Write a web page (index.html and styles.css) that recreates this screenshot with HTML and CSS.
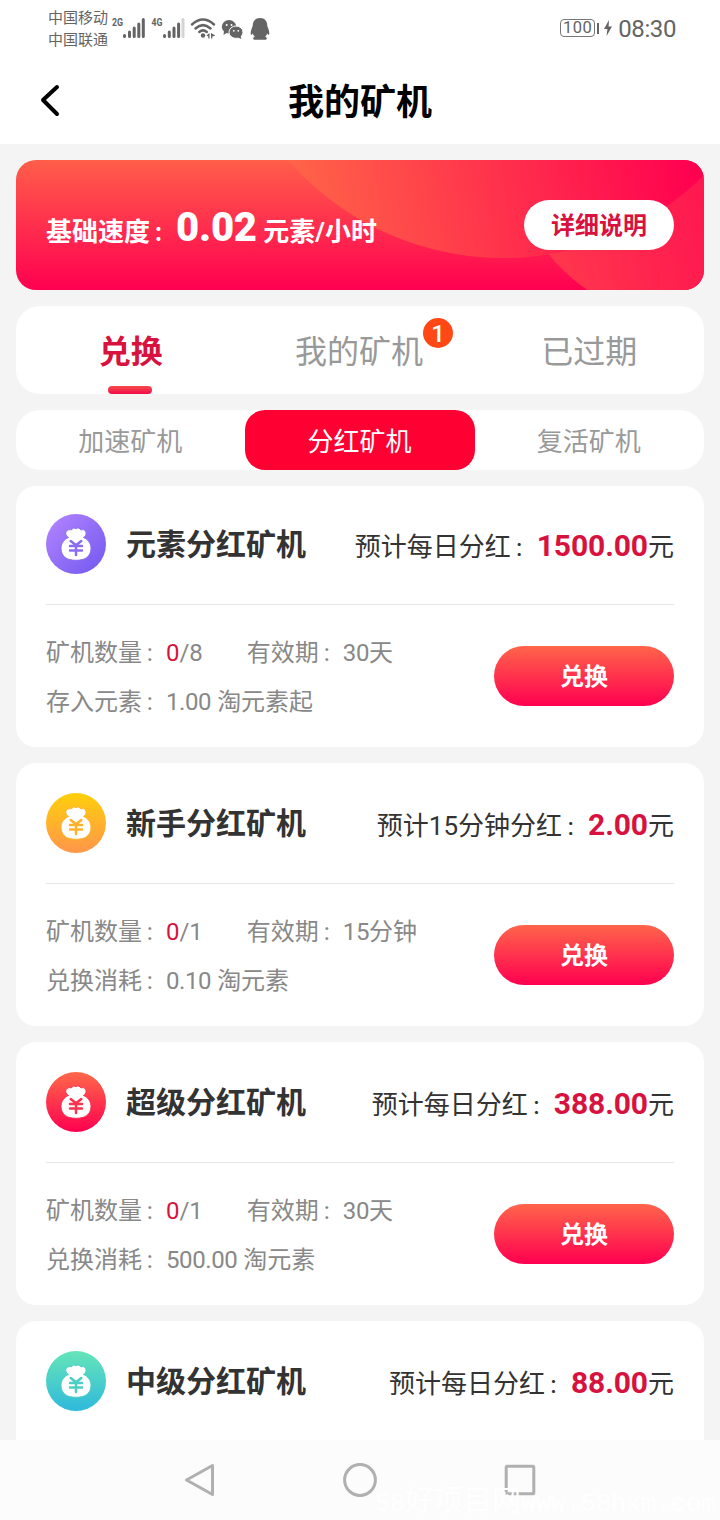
FILE: index.html
```html
<!DOCTYPE html>
<html lang="zh-CN">
<head>
<meta charset="utf-8">
<title>我的矿机</title>
<link rel="stylesheet" href="styles.css">
</head>
<body>
<svg class="defs" width="0" height="0">
  <symbol id="bag" viewBox="0 0 60 60">
    <path fill="#fff" d="M22.500 23.500C19.500 21.500 18.900 18.500 20.900 16.700C22 15.500 24 15.300 25.300 16C26.500 14 29 13.500 30 14.600C31.500 13.500 34 14 35 16C36.500 15.200 38.400 15.600 39.300 17C40.800 19 40 22 37.500 23.500C42.500 25.500 45.200 30 45 34.800C44.500 42.500 39.500 46.300 30 46.300C20.500 46.300 15.500 42.500 15 34.800C14.800 30 17.500 25.500 22.500 23.500Z"/>
    <path class="yen" fill="none" stroke-width="2.500" stroke-linecap="round" stroke-linejoin="round" d="M24.700 27L30 31.300L35.300 27M24 32H36M24 36.500H36M30 31.500V41"/>
  </symbol>
</svg>
<div class="screen">
  <header class="status">
    <div class="carriers"><span>中国移动</span><span>中国联通</span></div>
    <svg class="status-icons" width="162" height="40" viewBox="110 8 162 40" fill="#646464">
      <text class="net" x="112" y="26" textLength="11" lengthAdjust="spacingAndGlyphs">2G</text>
      <g stroke="#646464" stroke-width="3" stroke-linecap="round">
        <path d="M124.500 35.500V36.500M129.500 32V36.500M134.200 28V36.500M138.800 24V36.500M143.300 19.500V36.500"/>
        <path d="M164.500 35.500V36.500M169.300 32V36.500M174 28V36.500M178.600 24V36.500"/>
        <path stroke="#d4d4d4" d="M183 19.500V36.500"/>
      </g>
      <text class="net" x="151.500" y="26" textLength="11" lengthAdjust="spacingAndGlyphs">4G</text>
      <g fill="none" stroke="#646464" stroke-width="2.500" stroke-linecap="round">
        <path d="M192 24.500Q203 14.500 214 24.500M195.500 28.500Q203 21.800 210.500 28.500M199.300 32Q203 28.800 206.800 32"/>
      </g>
      <circle cx="203" cy="35.500" r="2.200"/>
      <path d="M206.500 35.500L209.500 33V38.500H208.300V36.500ZM211 33L215.300 35.500L212.300 36.500V38.500H211Z"/>
      <ellipse cx="229" cy="26.700" rx="7.200" ry="6.700"/><path d="M224 31L223.500 35L228 32Z"/>
      <ellipse cx="236" cy="32.200" rx="7" ry="6.200" stroke="#fff" stroke-width="1"/><path d="M237 37L241.300 39L240.500 35Z"/>
      <g fill="#fff"><circle cx="226.700" cy="25" r="1"/><circle cx="231.500" cy="25" r="1"/><circle cx="233.800" cy="30.800" r=".900"/><circle cx="238.300" cy="30.800" r=".900"/></g>
      <path d="M260 18C255 18 252.700 21.500 252.700 26C252 28 250.500 31 250.700 34C251 35.500 252.200 34.500 253 33.500C253.200 35 254 36 255 36.800C252.500 37.500 252.500 39.500 255 39.800H265C267.500 39.500 267.500 37.500 265 36.800C266 36 266.800 35 267 33.500C267.800 34.500 269 35.500 269.300 34C269.500 31 268 28 267.300 26C267.300 21.500 265 18 260 18Z"/>
    </svg>
    <div class="power">
      <span class="battery">100</span><span class="battery-tip"></span>
      <svg width="8" height="16" viewBox="0 0 8 16" fill="#646464"><path d="M5 0L0 9H3.400L2.600 16L8 6.500H4.600Z"/></svg>
      <span class="clock">08:30</span>
    </div>
  </header>
  <nav class="titlebar">
    <svg class="back" width="24" height="34" viewBox="0 0 24 34" fill="none" stroke="#000" stroke-width="4" stroke-linecap="round" stroke-linejoin="round"><path d="M19 4L5 17L19 31"/></svg>
    <h1>我的矿机</h1>
  </nav>
  <main class="content">
    <section class="banner">
      <svg class="banner-art" width="688" height="130" viewBox="0 0 688 130">
        <defs>
          <linearGradient id="big" gradientUnits="userSpaceOnUse" x1="285" y1="60" x2="680" y2="0"><stop stop-color="#ff6348"/><stop offset="1" stop-color="#ff0050"/></linearGradient>
          <linearGradient id="small" gradientUnits="userSpaceOnUse" x1="530" y1="110" x2="710" y2="70"><stop stop-color="#ff384d"/><stop offset="1" stop-color="#ff154f"/></linearGradient>
        </defs>
        <circle cx="656" cy="0" r="155" fill="url(#small)"/>
        <circle cx="487" cy="-187" r="285" fill="url(#big)"/>
      </svg>
      <div class="speed">基础速度<span class="colon">：</span><b>0.02</b> 元素/小时</div>
      <button class="detail">详细说明</button>
    </section>
    <section class="tabs">
      <div class="tab active">兑换</div>
      <div class="tab"><span class="tab-label">我的矿机<i class="badge">1</i></span></div>
      <div class="tab">已过期</div>
    </section>
    <section class="subtabs">
      <div class="subtab">加速矿机</div>
      <div class="subtab selected">分红矿机</div>
      <div class="subtab">复活矿机</div>
    </section>
    <section class="cards">
      <article class="card">
        <div class="card-head"><svg class="coin purple"><use href="#bag"/></svg><h2>元素分红矿机</h2><div class="rate">预计每日分红<span class="colon">：</span><b>1500.00</b>元</div></div>
        <div class="card-body"><div class="info"><p><span>矿机数量<span class="colon">：</span><em>0</em>/8</span><span>有效期<span class="colon">：</span><span class="num">30</span>天</span></p><p><span>存入元素<span class="colon">：</span><span class="num">1.00</span> 淘元素起</span></p></div><button class="redeem">兑换</button></div>
      </article>
      <article class="card">
        <div class="card-head"><svg class="coin orange"><use href="#bag"/></svg><h2>新手分红矿机</h2><div class="rate">预计15分钟分红<span class="colon">：</span><b>2.00</b>元</div></div>
        <div class="card-body"><div class="info"><p><span>矿机数量<span class="colon">：</span><em>0</em>/1</span><span>有效期<span class="colon">：</span><span class="num">15</span>分钟</span></p><p><span>兑换消耗<span class="colon">：</span><span class="num">0.10</span> 淘元素</span></p></div><button class="redeem">兑换</button></div>
      </article>
      <article class="card">
        <div class="card-head"><svg class="coin red"><use href="#bag"/></svg><h2>超级分红矿机</h2><div class="rate">预计每日分红<span class="colon">：</span><b>388.00</b>元</div></div>
        <div class="card-body"><div class="info"><p><span>矿机数量<span class="colon">：</span><em>0</em>/1</span><span>有效期<span class="colon">：</span><span class="num">30</span>天</span></p><p><span>兑换消耗<span class="colon">：</span><span class="num">500.00</span> 淘元素</span></p></div><button class="redeem">兑换</button></div>
      </article>
      <article class="card">
        <div class="card-head"><svg class="coin teal"><use href="#bag"/></svg><h2>中级分红矿机</h2><div class="rate">预计每日分红<span class="colon">：</span><b>88.00</b>元</div></div>
        <div class="card-body"></div>
      </article>
    </section>
  </main>
  <footer class="system-nav">
    <svg width="34" height="36" viewBox="0 0 34 36"><path d="M3.500 18L29.500 3.500V32.500Z"/></svg>
    <svg width="34" height="36" viewBox="0 0 34 36"><circle cx="17" cy="18" r="15.400"/></svg>
    <svg width="34" height="36" viewBox="0 0 34 36"><rect x="3.200" y="4.200" width="27.600" height="27.600" rx="1"/></svg>
    <div class="watermark">58<span>好项目网</span>www.58hxm.com</div>
  </footer>
</div>
</body>
</html>
```
FILE: styles.css
```css
* { box-sizing: border-box; }
body, h1, h2, p { margin: 0; }
body { font-family: Roboto, "Noto Sans CJK SC", sans-serif; background: #f4f4f4; color: #333; }
button { border: 0; padding: 0 0 3px; font-family: inherit; }
.defs { position: absolute; }
.colon { font-size: .8em; line-height: 0; margin-left: .16em; margin-right: .09em; }
.screen { width: 720px; height: 1520px; display: flex; flex-direction: column; overflow: hidden; }

.status { height: 56px; flex: none; background: #fff; display: flex; align-items: center; padding: 0 44px 0 48px; color: #646464; }
.carriers { display: flex; flex-direction: column; width: 62px; padding-top: 2px; font-size: 15px; line-height: 22px; white-space: nowrap; }
.status-icons { display: block; }
.net { font: bold 11px Roboto, sans-serif; }
.power { margin-left: auto; display: flex; align-items: center; }
.battery { width: 35px; height: 18px; border: 1.5px solid #777; border-radius: 4px; font-size: 16.5px; line-height: 16px; text-align: center; letter-spacing: .5px; }
.battery-tip { width: 2px; height: 11px; background: #646464; margin: 0 5px 0 2px; }
.clock { font-size: 24px; line-height: 28px; margin-left: 6px; padding-top: 2px; letter-spacing: -.4px; }

.titlebar { height: 88px; flex: none; background: #fff; display: grid; grid-template-columns: 80px 1fr 80px; align-items: center; }
.back { margin-left: 38px; }
.titlebar h1 { color: #000; font-size: 36px; line-height: 48px; font-weight: 700; text-align: center; padding-top: 5px; }

.content { flex: 1; min-height: 0; overflow: hidden; padding: 16px 16px 0; display: flex; flex-direction: column; gap: 16px; }
.banner { height: 130px; flex: none; border-radius: 20px; overflow: hidden; position: relative; display: flex; align-items: center; justify-content: space-between; padding: 0 30px; background: linear-gradient(#ff5e4a, #ff0050); }
.banner-art { position: absolute; left: 0; top: 0; }
.speed { position: relative; color: #fff; font-size: 26px; font-weight: 700; line-height: 48px; padding-top: 10px; white-space: nowrap; }
.speed b { font-size: 40px; letter-spacing: -.2px; }
.detail { position: relative; width: 150px; height: 50px; border-radius: 25px; background: #fff; color: #d8123e; font-size: 24px; font-weight: 700; }

.tabs { height: 88px; flex: none; border-radius: 24px; background: #fff; display: grid; grid-template-columns: repeat(3, 1fr); grid-template-rows: 88px; }
.tab { position: relative; text-align: center; font-size: 32px; line-height: 92px; color: #999; }
.tab.active { color: #d8123e; font-weight: 700; }
.tab.active::after { content: ""; position: absolute; width: 44px; height: 8px; left: 92px; bottom: 0; border-radius: 4px; background: linear-gradient(#f64c4b, #f00b49); }
.tab-label { position: relative; left: -1px; }
.badge { position: absolute; right: -30px; top: -15px; width: 30px; height: 30px; border-radius: 50%; background: #ff4815; color: #fff; font: 500 24px/32px Roboto, sans-serif; text-align: center; }

.subtabs { height: 60px; flex: none; border-radius: 24px; background: #fff; display: grid; grid-template-columns: repeat(3, 1fr); grid-template-rows: 60px; }
.subtab { text-align: center; font-size: 26px; line-height: 64px; color: #999; padding-right: 1px; }
.selected { background: #ff0032; color: #fff; border-radius: 20px; }

.cards { display: flex; flex-direction: column; gap: 16px; }
.card { background: #fff; border-radius: 20px; padding: 0 30px; flex: none; }
.card-head { height: 121px; display: flex; align-items: center; border-bottom: 1px solid #e6e6e6; }
.card:first-child .card-head { height: 119px; padding-bottom: 2px; }
.coin { width: 60px; height: 60px; border-radius: 50%; flex: none; }
.purple { background: linear-gradient(135deg, #b585ff, #7058ef); stroke: #8b6ef0; }
.orange { background: linear-gradient(#ffcf0b, #ff964a); stroke: #ffb22a; }
.red { background: linear-gradient(#ff694a, #ff0050); stroke: #f83450; }
.teal { background: linear-gradient(#65e5b8, #2fb9dc); stroke: #4bcfc4; }
.card-head h2 { margin-left: 20px; font-size: 30px; line-height: 40px; font-weight: 700; white-space: nowrap; padding-top: 2px; }
.rate { margin-left: auto; font-size: 26px; line-height: 40px; padding-top: 4px; white-space: nowrap; }
.rate b { font-size: 30px; color: #d8123e; letter-spacing: -.1px; }
.card-body { height: 142px; display: flex; align-items: center; justify-content: space-between; }
.info { color: #888; font-size: 24px; line-height: 49px; padding-top: 4px; }
.info p { display: flex; gap: 44px; white-space: nowrap; }
.info em { color: #d8123e; font-style: normal; }
.num { letter-spacing: -.4px; }
.redeem { width: 180px; height: 60px; border-radius: 30px; background: linear-gradient(#ff654a, #ff0050); color: #fff; font-size: 24px; font-weight: 700; }

.system-nav { height: 80px; flex: none; background: #fcfcfc; display: flex; align-items: center; justify-content: center; gap: 126px; position: relative; }
.system-nav svg { fill: none; stroke: #b0b0b0; stroke-width: 3; stroke-linejoin: round; }
.watermark { position: absolute; left: 375px; top: 49px; color: #fff; font: 25px/30px "Liberation Mono", "Noto Sans CJK SC", monospace; white-space: nowrap; }
.watermark span { font-size: 29px; }
```
